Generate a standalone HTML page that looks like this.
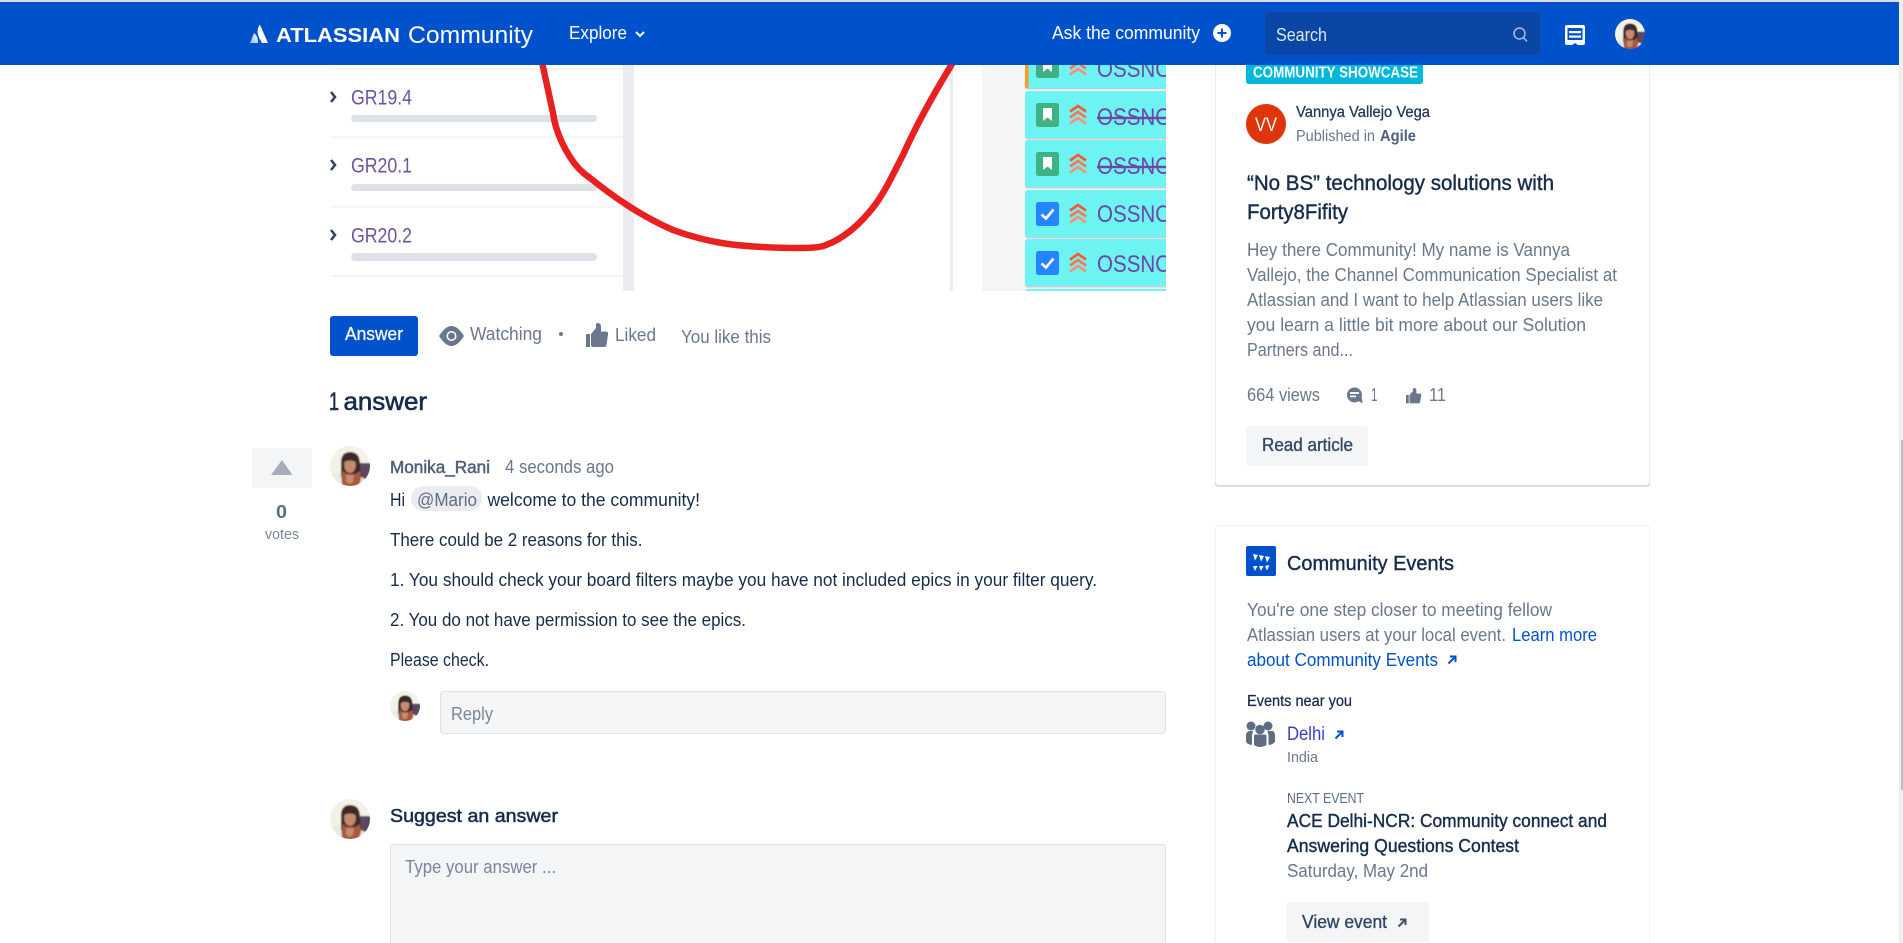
<!DOCTYPE html>
<html lang="en">
<head>
<meta charset="utf-8">
<title>Atlassian Community</title>
<style>
html,body{margin:0;padding:0;width:1903px;height:943px;overflow:hidden;background:#fff}
svg{display:block;position:absolute;left:0;top:0}
text{font-family:"Liberation Sans",Arial,sans-serif;font-size:18px;fill:#172b4d;white-space:pre}
.w{fill:#fff}
.g{fill:#6b778c}
.l{fill:#0052cc}
.m{stroke:#172b4d;stroke-width:.4px}
.gm{fill:#344563;stroke:#344563;stroke-width:.35px}
</style>
</head>
<body>
<svg width="1903" height="943" viewBox="0 0 1903 943" xmlns="http://www.w3.org/2000/svg">
<defs>
<clipPath id="c"><circle cx="20" cy="20" r="20"/></clipPath>
<filter id="soft" x="-10%" y="-10%" width="120%" height="120%"><feGaussianBlur stdDeviation=".7"/></filter>
<linearGradient id="lg" x1="1" y1="0" x2="0" y2="1"><stop offset="0" stop-color="#fff"/><stop offset="1" stop-color="#8fb3ea"/></linearGradient>
<g id="av"><g clip-path="url(#c)"><g filter="url(#soft)">
<rect x="-2" y="-2" width="44" height="44" fill="#f3f2e7"/>
<rect x="29" y="17" width="13" height="20" fill="#5d4660"/>
<path d="M-2 42V30L8 26 14 29V42Z" fill="#e9ebe8"/>
<path d="M25 42 31 31 42 36V42Z" fill="#e6e3e0"/>
<path d="M11 18Q10.500 6 20 6 30 6 30 18 30 24 32 30L27 36H13L11 30Q11 24 11 18Z" fill="#3a2a28"/>
<path d="M13 25Q10 32 13 42H27Q33 34 30 25L25 28H17Z" fill="#a9583d"/>
<path d="M16 29H24L23 36 19 38 16 35Z" fill="#c58c72"/>
<ellipse cx="20" cy="19" rx="5.800" ry="8" fill="#c48a70"/>
<path d="M14 16Q16 10 20.500 10 25 10 26 16 20 13 14 16Z" fill="#3a2a28"/>
</g></g></g>
<g id="arr"><path d="M1.500 8.500 7.500 2.500M3 1.500H8.500V7" fill="none" stroke-width="2"/></g>
<path id="thumb" d="M0 11H4V24H0ZM5 11 10 5V1.500Q10 0 11.500 0 15 0 15 4V8.500H20Q22.500 8.500 22 11.500L20.500 22Q20 24 18 24H7.500Q5 24 5 22Z"/>
<g id="bk"><rect width="23" height="24" rx="2.500" fill="#3fb283"/><path d="M7 5H16V18L11.500 14.500 7 18Z" fill="#fff"/></g>
<g id="ck"><rect width="23" height="24" rx="2.500" fill="#2684ff"/><path d="M5.500 12.500 10 16.500 17.500 7.500" fill="none" stroke="#fff" stroke-width="2.600"/></g>
<g id="pr" fill="none" stroke-width="2.600"><path d="M1 6.500 9 1 17 6.500" stroke="#ff5630"/><path d="M1 12.500 9 7 17 12.500" stroke="#ff7452"/><path d="M1 18.500 9 13 17 18.500" stroke="#ff8f73"/></g>
<g id="card"><rect x="0" y="1.500" width="160" height="47" rx="3" fill="#c9cdd3"/><rect width="160" height="47" rx="3" fill="#6cf3f2"/></g>
</defs>

<rect width="1903" height="943" fill="#fff"/>

<!-- screenshot embedded in the question -->
<g>
<rect x="330" y="68" width="293" height="1.500" fill="#f1f2f4"/>
<rect x="330" y="136.500" width="293" height="1.500" fill="#f1f2f4"/>
<rect x="330" y="206" width="293" height="1.500" fill="#f1f2f4"/>
<rect x="330" y="275" width="293" height="1.500" fill="#f1f2f4"/>
<rect x="623" y="65" width="11" height="226" fill="#ebecf0"/>
<g fill="none" stroke="#344563" stroke-width="2.600">
<path d="M331 92 335 97 331 102"/><path d="M331 160 335 165 331 170"/><path d="M331 230 335 235 331 240"/>
</g>
<text x="351" y="104.500" textLength="61" lengthAdjust="spacingAndGlyphs" style="font-size:21.500px;fill:#6b52a3">GR19.4</text>
<text x="351" y="172.500" textLength="61" lengthAdjust="spacingAndGlyphs" style="font-size:21.500px;fill:#6b52a3">GR20.1</text>
<text x="351" y="242.500" textLength="61" lengthAdjust="spacingAndGlyphs" style="font-size:21.500px;fill:#6b52a3">GR20.2</text>
<rect x="351" y="115" width="246" height="7" rx="3.500" fill="#dee1e5"/>
<rect x="351" y="184" width="246" height="7" rx="3.500" fill="#dee1e5"/>
<rect x="351" y="253" width="246" height="8" rx="4" fill="#dee1e5"/>
<rect x="950" y="65" width="3" height="226" fill="#ebecf0"/>
<rect x="982" y="65" width="184" height="226" fill="#f4f5f7"/>
<path d="M542 62 553 113Q556 135 570 157 578 170 590 178 610 194 627 205 650 220 673 230 700 240 728 244 760 248 800 248 820 248 826 245C845 238 862 222 875 205 886 190 894 172 903 155 915 128 930 100 952 64" fill="none" stroke="#e8201f" stroke-width="6.500" stroke-linecap="round" stroke-linejoin="round"/>
<svg x="1025" y="65" width="141" height="226" viewBox="1025 65 141 226">
<use href="#card" x="1025" y="41"/><rect x="1025" y="41" width="3.500" height="47" rx="1.500" fill="#ff991f"/>
<use href="#card" x="1025" y="91"/><use href="#card" x="1025" y="140"/><use href="#card" x="1025" y="190"/><use href="#card" x="1025" y="239"/><use href="#card" x="1025" y="289"/>
<use href="#bk" x="1036" y="54"/><use href="#bk" x="1036" y="103"/><use href="#bk" x="1036" y="152"/><use href="#ck" x="1036" y="202"/><use href="#ck" x="1036" y="251"/>
<use href="#pr" x="1069" y="56"/><use href="#pr" x="1069" y="105"/><use href="#pr" x="1069" y="154"/><use href="#pr" x="1069" y="204"/><use href="#pr" x="1069" y="253"/>
<text x="1097" y="77" textLength="80" lengthAdjust="spacingAndGlyphs" style="font-size:24px;fill:#6e46a6">OSSNOI</text>
<text x="1097" y="125" textLength="80" lengthAdjust="spacingAndGlyphs" style="font-size:24px;fill:#6e46a6;text-decoration:line-through">OSSNOI</text>
<text x="1097" y="174" textLength="80" lengthAdjust="spacingAndGlyphs" style="font-size:24px;fill:#6e46a6;text-decoration:line-through">OSSNOI</text>
<text x="1097" y="222" textLength="80" lengthAdjust="spacingAndGlyphs" style="font-size:24px;fill:#6e46a6">OSSNOI</text>
<text x="1097" y="272" textLength="80" lengthAdjust="spacingAndGlyphs" style="font-size:24px;fill:#6e46a6">OSSNOI</text>
</svg>
</g>

<!-- action row -->
<rect x="330" y="316" width="88" height="40" rx="3" fill="#0052cc"/>
<text x="345" y="340" textLength="58" lengthAdjust="spacingAndGlyphs" style="font-size:18px;fill:#fff;stroke:#fff;stroke-width:.25px">Answer</text>
<path d="M439 336Q451.500 316 464 336 451.500 356 439 336Z" fill="#6b778c"/><circle cx="451.500" cy="336" r="5" fill="#fff"/><circle cx="451.500" cy="336" r="3.500" fill="#6b778c"/>
<text class="g" x="470" y="340" textLength="72" lengthAdjust="spacingAndGlyphs">Watching</text>
<circle cx="561" cy="334" r="2" fill="#6b778c"/>
<use href="#thumb" x="586" y="323" fill="#6b778c"/>
<text class="g" x="615" y="341" textLength="41" lengthAdjust="spacingAndGlyphs">Liked</text>
<text class="g" x="681" y="343" textLength="90" lengthAdjust="spacingAndGlyphs">You like this</text>

<text x="329" y="410" textLength="10" lengthAdjust="spacingAndGlyphs" style="font-size:25px;stroke:#172b4d;stroke-width:.6px">1</text>
<text x="343.500" y="410" textLength="83.500" lengthAdjust="spacingAndGlyphs" style="font-size:25px;stroke:#172b4d;stroke-width:.6px">answer</text>

<!-- vote -->
<rect x="252" y="448" width="60" height="40" rx="3" fill="#f4f5f7"/>
<path d="M282 460 292.500 475H271Z" fill="#a5adba"/>
<text x="276" y="518" textLength="11" lengthAdjust="spacingAndGlyphs" style="font-size:18px;font-weight:bold;fill:#5e6c84">0</text>
<text x="265" y="539" textLength="34" lengthAdjust="spacingAndGlyphs" style="font-size:15px;fill:#7a869a">votes</text>

<!-- answer -->
<use href="#av" x="330" y="446"/>
<text x="390" y="473" textLength="100" lengthAdjust="spacingAndGlyphs" style="font-size:17.500px;fill:#505f79;stroke:#505f79;stroke-width:.5px">Monika_Rani</text>
<text class="g" x="505" y="473" textLength="109" lengthAdjust="spacingAndGlyphs">4 seconds ago</text>
<text x="390" y="506" textLength="15" lengthAdjust="spacingAndGlyphs">Hi</text>
<rect x="411" y="486" width="71" height="25" rx="12" fill="#ebecf0"/>
<text x="417" y="506" textLength="60" lengthAdjust="spacingAndGlyphs" style="fill:#5e6c84">@Mario</text>
<text x="487.500" y="506" textLength="212.500" lengthAdjust="spacingAndGlyphs">welcome to the community!</text>
<text x="390" y="546" textLength="252.500" lengthAdjust="spacingAndGlyphs">There could be 2 reasons for this.</text>
<text x="390" y="586" textLength="707" lengthAdjust="spacingAndGlyphs">1. You should check your board filters maybe you have not included epics in your filter query.</text>
<text x="390" y="626" textLength="356" lengthAdjust="spacingAndGlyphs">2. You do not have permission to see the epics.</text>
<text x="390" y="666" textLength="99" lengthAdjust="spacingAndGlyphs">Please check.</text>

<g transform="translate(390 691) scale(.75)"><use href="#av"/></g>
<rect x="440.500" y="691.500" width="725" height="42" rx="3" fill="#f4f5f7" stroke="#dfe1e6"/>
<text x="451" y="720" textLength="42" lengthAdjust="spacingAndGlyphs" style="fill:#7a869a">Reply</text>

<use href="#av" x="330" y="799"/>
<text x="390" y="822" textLength="168" lengthAdjust="spacingAndGlyphs" style="font-size:18.500px;stroke:#172b4d;stroke-width:.5px">Suggest an answer</text>
<rect x="390.500" y="844.500" width="775" height="120" rx="3" fill="#f4f5f7" stroke="#dfe1e6"/>
<text x="405" y="873" textLength="151" lengthAdjust="spacingAndGlyphs" style="fill:#7a869a">Type your answer ...</text>

<!-- showcase card -->
<rect x="1215.500" y="30" width="434" height="455.500" rx="3" fill="#fff" stroke="#ebecf0"/>
<path d="M1215.500 483Q1215.500 486 1219 486H1646Q1649.500 486 1649.500 483" fill="none" stroke="#c1c7d0"/>
<path d="M1246 60H1423V81Q1423 84 1420 84H1249Q1246 84 1246 81Z" fill="#00b8d9"/>
<text x="1253" y="77.500" textLength="165" lengthAdjust="spacingAndGlyphs" style="font-size:15.500px;font-weight:bold;fill:#fff">COMMUNITY SHOWCASE</text>
<circle cx="1266" cy="124" r="20" fill="#de350b"/>
<text x="1255" y="131" textLength="22" lengthAdjust="spacingAndGlyphs" style="font-size:19px;fill:#fff">VV</text>
<text x="1296" y="117" textLength="134" lengthAdjust="spacingAndGlyphs" style="font-size:15.500px;fill:#253858;stroke:#253858;stroke-width:.3px">Vannya Vallejo Vega</text>
<text class="g" x="1296" y="141" textLength="79" lengthAdjust="spacingAndGlyphs" style="font-size:15.500px">Published in</text>
<text x="1380" y="141" textLength="36" lengthAdjust="spacingAndGlyphs" style="font-size:15.500px;font-weight:bold;fill:#505f79">Agile</text>
<text class="m" x="1247" y="190" textLength="307" lengthAdjust="spacingAndGlyphs" style="font-size:21px">“No BS” technology solutions with</text>
<text class="m" x="1247" y="219" textLength="101" lengthAdjust="spacingAndGlyphs" style="font-size:21px">Forty8Fifity</text>
<text class="g" x="1247" y="256" textLength="323" lengthAdjust="spacingAndGlyphs">Hey there Community! My name is Vannya</text>
<text class="g" x="1247" y="281" textLength="370" lengthAdjust="spacingAndGlyphs">Vallejo, the Channel Communication Specialist at</text>
<text class="g" x="1247" y="306" textLength="356" lengthAdjust="spacingAndGlyphs">Atlassian and I want to help Atlassian users like</text>
<text class="g" x="1247" y="331" textLength="339" lengthAdjust="spacingAndGlyphs">you learn a little bit more about our Solution</text>
<text class="g" x="1247" y="356" textLength="106" lengthAdjust="spacingAndGlyphs">Partners and...</text>
<text class="g" x="1247" y="401" textLength="73" lengthAdjust="spacingAndGlyphs">664 views</text>
<circle cx="1354.500" cy="395" r="7.500" fill="#6b778c"/><path d="M1357 400 1362.500 403.500 1361.500 396Z" fill="#6b778c"/>
<rect x="1350" y="392" width="9" height="2" fill="#fff"/><rect x="1350" y="395.500" width="6" height="1.800" fill="#fff"/>
<text class="g" x="1371" y="401" textLength="6.500" lengthAdjust="spacingAndGlyphs">1</text>
<g transform="translate(1406 388) scale(.69 .64)" fill="#6b778c"><use href="#thumb"/></g>
<text class="g" x="1429" y="401" textLength="17" lengthAdjust="spacingAndGlyphs">11</text>
<rect x="1246" y="426" width="122" height="40" rx="3" fill="#f4f5f7"/>
<text class="gm" x="1262" y="451" textLength="91" lengthAdjust="spacingAndGlyphs">Read article</text>

<!-- events card -->
<rect x="1215.500" y="525.500" width="434" height="430" rx="3" fill="#fff" stroke="#f1f2f4"/>
<rect x="1246" y="546" width="30" height="30" rx="2" fill="#0052cc"/>
<g fill="#fff"><path d="M1253 554 1258 555 1255 560.500Z"/><path d="M1259 555 1264 556 1261 561.500Z"/><path d="M1265 556 1270 557 1267 562.500Z"/><path d="M1253 566 1257.500 566 1255 571Z"/><path d="M1259 566 1263.500 566 1261 571Z"/><path d="M1265 566 1269.500 565 1267 570.500Z"/></g>
<text class="m" x="1287" y="570" textLength="167" lengthAdjust="spacingAndGlyphs" style="font-size:20.500px">Community Events</text>
<text class="g" x="1247" y="616" textLength="305" lengthAdjust="spacingAndGlyphs">You're one step closer to meeting fellow</text>
<text class="g" x="1247" y="641" textLength="259" lengthAdjust="spacingAndGlyphs">Atlassian users at your local event.</text>
<text class="l" x="1512" y="641" textLength="85" lengthAdjust="spacingAndGlyphs">Learn more</text>
<text class="l" x="1247" y="666" textLength="191" lengthAdjust="spacingAndGlyphs">about Community Events</text>
<use href="#arr" x="1447" y="655" stroke="#0052cc"/>
<text x="1247" y="706" textLength="105" lengthAdjust="spacingAndGlyphs" style="font-size:15.500px;stroke:#172b4d;stroke-width:.25px">Events near you</text>
<g fill="#5e6c84"><circle cx="1251" cy="726" r="4.500"/><circle cx="1268" cy="726" r="4.500"/><circle cx="1260" cy="729.500" r="4.800"/><path d="M1246 741V736Q1246 731 1250 731H1253L1252 735V745Q1246 744 1246 741ZM1273 731Q1275 732 1275 736V741Q1275 744 1268.500 745V735L1267.500 731ZM1254 736Q1254 734.500 1256 734.500H1264.500Q1266.500 734.500 1266.500 736V745Q1260 749 1254 745Z"/></g>
<text x="1287" y="740" textLength="38" lengthAdjust="spacingAndGlyphs" style="font-size:19px;fill:#3b40c9">Delhi</text>
<use href="#arr" x="1334" y="730" stroke="#0052cc"/>
<text class="g" x="1287" y="762" textLength="31" lengthAdjust="spacingAndGlyphs" style="font-size:15px">India</text>
<text x="1287" y="803" textLength="77" lengthAdjust="spacingAndGlyphs" style="font-size:15px;fill:#5e6c84">NEXT EVENT</text>
<text class="m" x="1287" y="827" textLength="320" lengthAdjust="spacingAndGlyphs">ACE Delhi-NCR: Community connect and</text>
<text class="m" x="1287" y="852" textLength="232" lengthAdjust="spacingAndGlyphs">Answering Questions Contest</text>
<text class="g" x="1287" y="877" textLength="141" lengthAdjust="spacingAndGlyphs">Saturday, May 2nd</text>
<rect x="1286" y="902" width="143" height="40" rx="3" fill="#f4f5f7"/>
<text class="gm" x="1302" y="928" textLength="85" lengthAdjust="spacingAndGlyphs">View event</text>
<use href="#arr" x="1397" y="918" stroke="#42526e"/>

<!-- header -->
<rect width="1899" height="2" fill="#dedede"/>
<rect y="2" width="1899" height="63" fill="#0052cc"/>
<path d="M259 25.500Q256 32 259.500 38.500L262 43H268L260.300 25.500Q259.600 24.500 259 25.500Z" fill="#fff"/>
<path d="M254.800 33.500Q254.200 33 253.700 34L250 43H258Q258.500 37.500 254.800 33.500Z" fill="url(#lg)"/>
<text x="276" y="42" textLength="124" lengthAdjust="spacingAndGlyphs" style="font-size:20px;font-weight:bold;fill:#fff">ATLASSIAN</text>
<text x="408" y="43" textLength="125" lengthAdjust="spacingAndGlyphs" style="font-size:24px;fill:#fff">Community</text>
<text x="569" y="39" textLength="58" lengthAdjust="spacingAndGlyphs" style="font-size:18px;fill:#fff">Explore</text>
<path d="M636 32 640 36 644 32" fill="none" stroke="#fff" stroke-width="2"/>
<text x="1052" y="39" textLength="148" lengthAdjust="spacingAndGlyphs" style="font-size:18.500px;fill:#fff">Ask the community</text>
<circle cx="1222" cy="33" r="9" fill="#fff"/><path d="M1222 28.500V37.500M1217.500 33H1226.500" stroke="#0052cc" stroke-width="2"/>
<rect x="1265" y="12" width="275" height="43" rx="3" fill="#0a47a5"/>
<text x="1276" y="41" textLength="51" lengthAdjust="spacingAndGlyphs" style="font-size:18.500px;fill:#dfe6f2">Search</text>
<circle cx="1519.500" cy="33.500" r="5.500" fill="none" stroke="#a9bcdc" stroke-width="1.500"/><path d="M1523.500 37.500 1527 41.500" stroke="#a9bcdc" stroke-width="1.500"/>
<path d="M1567 25H1583Q1585 25 1585 27V43Q1585 45 1583 45H1578L1575 43 1572 45H1567Q1565 45 1565 43V27Q1565 25 1567 25Z" fill="#fff"/>
<rect x="1567.500" y="28" width="15" height="12" fill="#0052cc"/>
<rect x="1569" y="31" width="12" height="2.200" fill="#fff"/><rect x="1569" y="35.500" width="12" height="2.200" fill="#fff"/>
<g transform="translate(1615 19) scale(.75)"><use href="#av"/></g>

<!-- scrollbar -->
<rect x="1899" width="4" height="943" fill="#eeeeee"/>
<rect x="1901" y="440" width="2" height="350" fill="#bdbdbd"/>
</svg>
</body>
</html>
